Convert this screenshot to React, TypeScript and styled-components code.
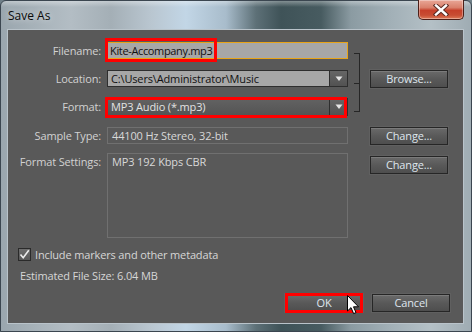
import React from "react";
import styled, { createGlobalStyle } from "styled-components";

const Global = createGlobalStyle`
  html, body { margin: 0; padding: 0; background: #6f7f88; }
  body { width: 472px; height: 332px; overflow: hidden; }
  * { box-sizing: border-box; }
`;

const FONT = `"Open Sans", "Noto Sans", "DejaVu Sans", sans-serif`;

const Window = styled.div`
  position: relative;
  width: 472px;
  height: 332px;
  display: flex;
  flex-direction: column;
  border: 1px solid #3b4650;
  border-radius: 6px 6px 0 0;
  font-family: ${FONT};
  letter-spacing: -0.15px;
  background:
    linear-gradient(180deg, rgba(255,255,255,0.35) 0px, rgba(255,255,255,0) 6px),
    linear-gradient(90deg,
      #9aa6ae 0px, #a9b4bb 40px, #b3bdc4 70px, #a4afb6 110px,
      #b9c6d0 150px, #c2d6e6 185px, #a8bccb 225px, #5d7077 255px,
      #3f5358 280px, #475b60 320px, #8b9ba2 350px, #a2b0b7 390px,
      #b4c0c6 430px, #9eabb2 472px);
`;

const TitleBar = styled.div`
  height: 28px;
  display: flex;
  align-items: flex-start;
  padding-left: 7px;
`;

const Title = styled.span`
  margin-top: 6px;
  font-size: 12px;
  letter-spacing: 0;
  color: #0a0a0a;
  text-shadow: 0 0 6px rgba(255,255,255,0.7);
`;

const CloseButton = styled.div`
  margin-left: auto;
  margin-right: 7px;
  margin-top: -1px;
  width: 46px;
  height: 20px;
  border: 1px solid #4d1f18;
  border-top: none;
  border-radius: 0 0 5px 5px;
  background: linear-gradient(180deg, #e9a797 0%, #d9806b 40%, #c6402a 55%, #c84d33 80%, #dc7a58 100%);
  box-shadow: inset 0 0 0 1px rgba(255,255,255,0.35);
  display: flex;
  align-items: center;
  justify-content: center;
`;

const Content = styled.div`
  flex: 1;
  margin: 0 7px 7px 6px;
  border: 1px solid #b9c3ca;
  background: #595959;
  display: flex;
  flex-direction: column;
  padding: 12px 12px 11px 0;
  position: relative;
`;

const Grid = styled.div`
  display: grid;
  grid-template-columns: 99px 241px 22px 78px;
  grid-template-rows: 17px 17px 18px 17px 85px;
  row-gap: 11px;
`;

const Label = styled.div<{ $row: number; $mt?: number }>`
  grid-column: 1;
  grid-row: ${(p) => p.$row};
  margin-top: ${(p) => p.$mt ?? 0}px;
  padding-right: 6px;
  text-align: right;
  font-size: 11px;
  line-height: 17px;
  color: #d2d2d2;
  white-space: nowrap;
`;

const FieldCell = styled.div<{ $row: number; $mt?: number }>`
  position: relative;
  grid-column: 2;
  grid-row: ${(p) => p.$row};
  margin-top: ${(p) => p.$mt ?? 0}px;
`;

const TextInput = styled.div<{ $focus?: boolean }>`
  height: 17px;
  background: #a7a7a7;
  border: 1px solid ${(p) => (p.$focus ? "#e8a418" : "#333")};
  color: #111;
  font-size: 11px;
  letter-spacing: -0.35px;
  line-height: 15px;
  padding-left: 2px;
  white-space: nowrap;
  overflow: hidden;
`;

const Combo = styled.div<{ $dark?: boolean }>`
  height: ${(p) => (p.$dark ? 18 : 17)}px;
  display: flex;
  border: 1px solid #2e2e2e;
  background: ${(p) => (p.$dark ? "linear-gradient(180deg, #626262, #545454)" : "#a7a7a7")};
  color: ${(p) => (p.$dark ? "#e2e2e2" : "#111")};
  font-size: 11px;
  line-height: ${(p) => (p.$dark ? 16 : 15)}px;
`;

const ComboText = styled.div`
  flex: 1;
  padding-left: 3px;
  white-space: nowrap;
  overflow: hidden;
`;

const ComboArrow = styled.div`
  width: 18px;
  border-left: 1px solid #2e2e2e;
  background: linear-gradient(180deg, #666, #525252);
  display: flex;
  align-items: center;
  justify-content: center;
`;

const ReadBox = styled.div<{ $tall?: boolean }>`
  height: ${(p) => (p.$tall ? 85 : 17)}px;
  border: 1px solid #707070;
  color: #d8d8d8;
  font-size: 11px;
  line-height: 15px;
  padding-left: 4px;
`;

const Bracket = styled.div`
  grid-column: 3;
  grid-row: 1 / span 3;
  margin: 11px 0 4px 6px;
  width: 6px;
  border: 1px solid #262626;
  border-left: none;
  position: relative;
  &::after {
    content: "";
    position: absolute;
    left: 0;
    right: 0;
    top: 50%;
    border-top: 1px solid #262626;
  }
`;

const Button = styled.div<{ $row?: number; $mt?: number }>`
  grid-column: 4;
  ${(p) => (p.$row ? `grid-row: ${p.$row};` : "")}
  height: 18px;
  width: 78px;
  margin-top: ${(p) => p.$mt ?? 0}px;
  border: 1px solid #262626;
  background: linear-gradient(180deg, #6a6a6a 0%, #595959 50%, #4e4e4e 100%);
  box-shadow: inset 0 1px 0 rgba(255,255,255,0.12), 0 0 0 1px rgba(120,120,120,0.25);
  color: #dfe6ee;
  font-size: 11px;
  line-height: 16px;
  text-align: center;
  position: relative;
`;

const Highlight = styled.div<{ $l: number; $t: number; $w: number; $h: number }>`
  position: absolute;
  left: ${(p) => p.$l}px;
  top: ${(p) => p.$t}px;
  width: ${(p) => p.$w}px;
  height: ${(p) => p.$h}px;
  border: 3px solid #ff0000;
  pointer-events: none;
`;

const CheckRow = styled.div`
  margin-top: 7px;
  margin-left: 10px;
  display: flex;
  align-items: center;
  gap: 4px;
  font-size: 11px;
  color: #d6d6d6;
  height: 14px;
`;

const CheckBox = styled.div`
  width: 13px;
  height: 13px;
  border: 1px solid #2a2a2a;
  background: linear-gradient(180deg, #6e6e6e, #585858);
  display: flex;
  align-items: center;
  justify-content: center;
`;

const Info = styled.div`
  margin-top: 8px;
  margin-left: 12px;
  font-size: 11px;
  line-height: 14px;
  color: #d6d6d6;
`;

const ButtonRow = styled.div`
  margin-top: auto;
  display: flex;
  justify-content: flex-end;
  gap: 9px;
  padding-right: 1px;
`;

const Cursor = styled.svg`
  position: absolute;
  left: 346px;
  top: 294px;
`;

const Arrow = () => (
  <svg width="8" height="6" viewBox="0 0 8 6">
    <path d="M0.5 0.5 H7.5 L4 5 Z" fill="#e6e6e6" />
  </svg>
);

export default function App() {
  return (
    <>
      <Global />
      <Window>
        <TitleBar>
          <Title>Save As</Title>
          <CloseButton>
            <svg width="16" height="12" viewBox="0 0 16 12">
              <path d="M3 1.5 L13 10.5 M13 1.5 L3 10.5" stroke="#5a2a22" strokeWidth="4.4" strokeLinecap="square" />
              <path d="M3 1.5 L13 10.5 M13 1.5 L3 10.5" stroke="#ffffff" strokeWidth="2.4" strokeLinecap="square" />
            </svg>
          </CloseButton>
        </TitleBar>
        <Content>
          <Grid>
            <Label $row={1}>Filename:</Label>
            <FieldCell $row={1}>
              <TextInput $focus>Kite-Accompany.mp3</TextInput>
              <Highlight $l={-2} $t={-4} $w={112} $h={24} />
            </FieldCell>
            <Bracket />

            <Label $row={2}>Location:</Label>
            <FieldCell $row={2}>
              <Combo>
                <ComboText>C:\Users\Administrator\Music</ComboText>
                <ComboArrow><Arrow /></ComboArrow>
              </Combo>
            </FieldCell>
            <Button $row={2}>Browse...</Button>

            <Label $row={3}>Format:</Label>
            <FieldCell $row={3}>
              <Combo $dark>
                <ComboText>MP3 Audio (*.mp3)</ComboText>
                <ComboArrow><Arrow /></ComboArrow>
              </Combo>
              <Highlight $l={-2} $t={-1} $w={242} $h={21} />
            </FieldCell>

            <Label $row={4}>Sample Type:</Label>
            <FieldCell $row={4}>
              <ReadBox>44100 Hz Stereo, 32-bit</ReadBox>
            </FieldCell>
            <Button $row={4}>Change...</Button>

            <Label $row={5} $mt={-2}>Format Settings:</Label>
            <FieldCell $row={5} $mt={-2}>
              <ReadBox $tall>MP3 192 Kbps CBR</ReadBox>
            </FieldCell>
            <Button $row={5} $mt={1}>Change...</Button>
          </Grid>

          <CheckRow>
            <CheckBox>
              <svg width="11" height="11" viewBox="0 0 11 11">
                <path d="M1.5 5.5 L4.2 8.8 L9.8 1.2" fill="none" stroke="#ececec" strokeWidth="1.6" />
              </svg>
            </CheckBox>
            Include markers and other metadata
          </CheckRow>
          <Info>Estimated File Size: 6.04 MB</Info>

          <ButtonRow>
            <Button>
              OK
              <Highlight $l={-1} $t={-2} $w={78} $h={20} />
            </Button>
            <Button>Cancel</Button>
          </ButtonRow>
        </Content>
        <Cursor width="13" height="20" viewBox="0 0 13 20">
          <path d="M0.5 0.5 L0.5 16 L4 12.6 L6.6 18.6 L9 17.6 L6.5 11.8 L11.5 11.8 Z" fill="#ffffff" stroke="#000" strokeWidth="1" strokeLinejoin="miter" />
        </Cursor>
      </Window>
    </>
  );
}
